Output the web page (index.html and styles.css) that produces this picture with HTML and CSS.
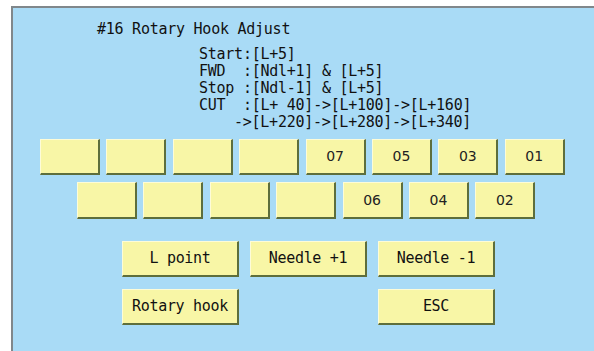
FILE: index.html
```html
<!DOCTYPE html>
<html>
<head>
<meta charset="utf-8">
<link rel="stylesheet" href="styles.css">
</head>
<body>
<div class="panel">
  <div class="title">#16 Rotary Hook Adjust</div>
  <div class="info">
    <div class="line">Start:[L+5]</div>
    <div class="line">FWD&nbsp;&nbsp;:[Ndl+1] &amp; [L+5]</div>
    <div class="line">Stop&nbsp;:[Ndl-1] &amp; [L+5]</div>
    <div class="line">CUT&nbsp;&nbsp;:[L+ 40]-&gt;[L+100]-&gt;[L+160]</div>
    <div class="line indent">-&gt;[L+220]-&gt;[L+280]-&gt;[L+340]</div>
  </div>
  <div class="grid">
    <div class="row row-a">
      <div class="key"></div>
      <div class="key"></div>
      <div class="key"></div>
      <div class="key"></div>
      <div class="key">07</div>
      <div class="key">05</div>
      <div class="key">03</div>
      <div class="key">01</div>
    </div>
    <div class="row row-b">
      <div class="key"></div>
      <div class="key"></div>
      <div class="key"></div>
      <div class="key"></div>
      <div class="key">06</div>
      <div class="key">04</div>
      <div class="key">02</div>
    </div>
  </div>
  <div class="actions">
    <div class="arow">
      <div class="btn">L point</div>
      <div class="btn">Needle +1</div>
      <div class="btn">Needle -1</div>
    </div>
    <div class="arow">
      <div class="btn">Rotary hook</div>
      <div class="btn ghost"></div>
      <div class="btn">ESC</div>
    </div>
  </div>
</div>
</body>
</html>
```
FILE: styles.css
```css
html, body {
  margin: 0;
  padding: 0;
  background: #ffffff;
  width: 594px;
  height: 351px;
  overflow: hidden;
}

.panel {
  margin: 6px 0 0 11px;
  height: 345px;
  box-sizing: border-box;
  background: #a9dbf6;
  border-top: 2px solid #80878b;
  border-left: 2px solid #80878b;
  font-family: "DejaVu Sans Mono", "Liberation Mono", monospace;
  font-size: 15px;
  color: #111;
}

.title {
  padding: 13px 0 0 84px;
  line-height: 16px;
  letter-spacing: -0.25px;
  white-space: pre;
}

.info {
  padding: 9px 0 0 186px;
  letter-spacing: -0.25px;
}

.line {
  line-height: 17px;
  white-space: pre;
}

.indent {
  padding-left: 35px;
}

.grid {
  padding-top: 7.5px;
  display: flex;
  flex-direction: column;
  gap: 7px;
}

.row {
  display: flex;
  gap: 6.4px;
}

.row-a { padding-left: 27px; }
.row-b { padding-left: 64px; }

.key {
  width: 60px;
  height: 36px;
  box-sizing: border-box;
  background: #f8f6a6;
  border-top: 1px solid #fdfcd8;
  border-left: 1px solid #fdfcd8;
  border-right: 2px solid #5d6e3c;
  border-bottom: 2px solid #5d6e3c;
  display: flex;
  align-items: center;
  justify-content: center;
  font-family: "DejaVu Sans", "Liberation Sans", sans-serif;
  font-size: 14px;
  color: #222;
}

.row-b .key {
  height: 37px;
}

.actions {
  padding: 22px 0 0 109px;
  display: flex;
  flex-direction: column;
  gap: 12px;
}

.arow {
  display: flex;
  gap: 11px;
}

.btn {
  width: 117px;
  height: 36px;
  box-sizing: border-box;
  background: #f8f6a6;
  border-top: 1px solid #fdfcd8;
  border-left: 1px solid #fdfcd8;
  border-right: 2px solid #5d6e3c;
  border-bottom: 2px solid #5d6e3c;
  display: flex;
  align-items: center;
  justify-content: center;
  letter-spacing: -0.3px;
  color: #111;
}

.ghost {
  visibility: hidden;
}
```
